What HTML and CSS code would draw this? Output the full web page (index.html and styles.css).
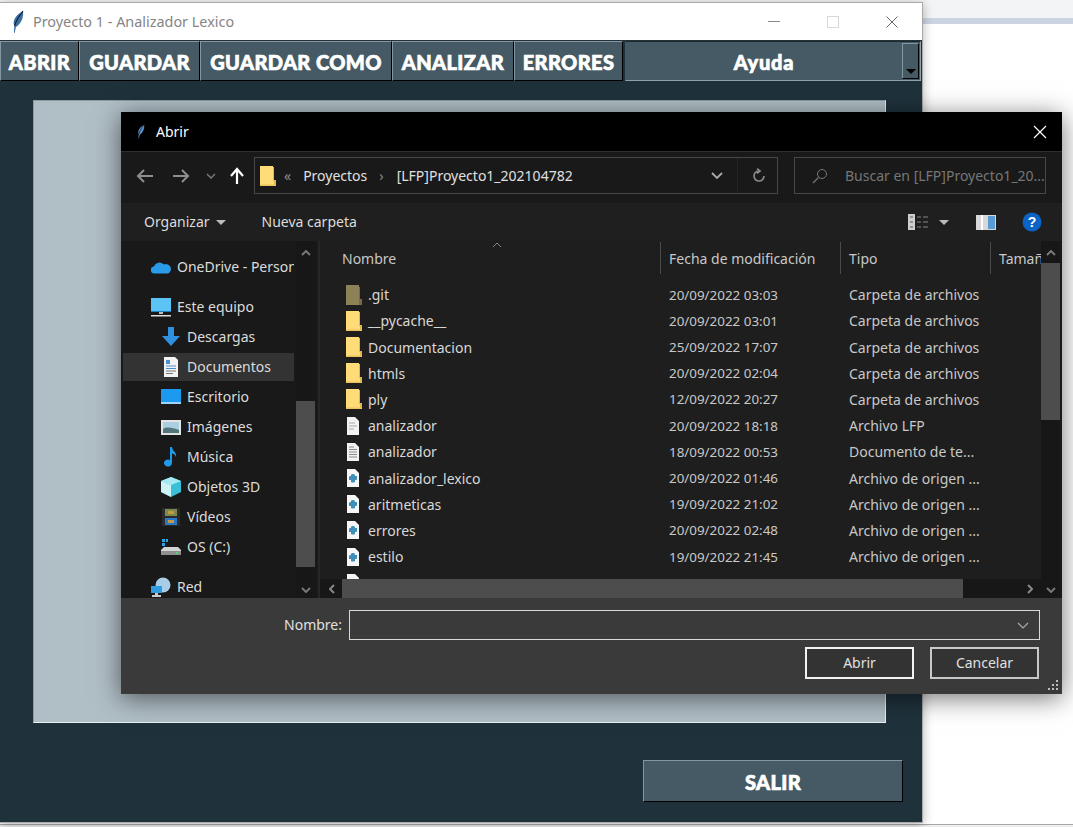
FILE: index.html
```html
<!DOCTYPE html>
<html lang="es">
<head>
    <meta charset="UTF-8">
    <title>Proyecto 1 - Analizador Lexico</title>
    <link rel="stylesheet" href="styles.css">
</head>
<body>
    <svg class="defs" width="0" height="0">
        <defs>
            <symbol id="feather" viewBox="0 0 16 24">
                <path d="M4 23 C4 20 4 18 4.500 16 C2 12 5 5 13 1 C14 7 11 14 6 17 C5.500 19 5 21 4.600 23Z" fill="currentColor"/>
                <path d="M4.500 16 C6 11 9 6 13 1" stroke="#0d2238" stroke-width="1.200" fill="none"/>
            </symbol>
            <symbol id="folder" viewBox="0 0 16 20">
                <path d="M0 0H13V14H16V20H0Z" fill="#ffdc78"/>
                <path d="M13 1H14V14H16V20H14V15H13Z" fill="#e0b84e"/>
                <path d="M0 18.500H16V20H0Z" fill="#eec25a"/>
            </symbol>
            <symbol id="folder-git" viewBox="0 0 16 20">
                <path d="M0 0H13V14H16V20H0Z" fill="#8d8158"/>
                <path d="M13 2H14V14H16V20H13Z" fill="#766b47"/>
            </symbol>
            <symbol id="doc-lfp" viewBox="0 0 14 18">
                <path d="M1 0H9L13 4V18H1Z" fill="#f2f2f2"/>
                <path d="M3 6H9M3 9H11M3 12H8" stroke="#aaa" fill="none"/>
            </symbol>
            <symbol id="doc-txt" viewBox="0 0 14 18">
                <path d="M1 0H9L13 4V18H1Z" fill="#f2f2f2"/>
                <path d="M3 4H8M3 6.500H11M3 9H11M3 11.500H11M3 14H11" stroke="#888" fill="none"/>
            </symbol>
            <symbol id="doc-py" viewBox="0 0 14 18">
                <path d="M1 0H9L13 4V18H1Z" fill="#f6f6f6"/>
                <path d="M7 5C9 5 9 6 9 7H11V10C11 11 10 11 9 11V13C7.500 14 5.500 13.500 5 13V11H3V8C3 7 4 7 5 7V6C5 5 6 5 7 5Z" fill="#3f8fb8"/>
            </symbol>
        </defs>
    </svg>

    <div class="bg-top"></div>
    <div class="bg-band"></div>
    <div class="bg-bottom"></div>

    <!-- ventana principal -->
    <div class="win-main">
        <div class="titlebar">
            <svg class="feather" width="16" height="24"><use href="#feather"/></svg>
            <span class="title-text">Proyecto 1 - Analizador Lexico</span>
            <div class="win-controls">
                <span class="ctl-min"></span>
                <span class="ctl-max"></span>
                <svg width="12" height="12" viewBox="0 0 12 12"><path d="M0.500 0.500L11.500 11.500M11.500 0.500L0.500 11.500" stroke="#666" fill="none"/></svg>
            </div>
        </div>
        <div class="menubar">
            <button class="tk-btn w-abrir">ABRIR</button>
            <button class="tk-btn w-guardar">GUARDAR</button>
            <button class="tk-btn w-como">GUARDAR COMO</button>
            <button class="tk-btn w-analizar">ANALIZAR</button>
            <button class="tk-btn w-errores">ERRORES</button>
            <div class="combo">
                <span class="combo-text">Ayuda</span>
                <span class="combo-arrow"></span>
            </div>
        </div>
        <div class="main-body">
            <div class="text-panel"></div>
            <div class="exit-row">
                <button class="tk-btn btn-salir">SALIR</button>
            </div>
        </div>
    </div>

    <!-- dialogo abrir -->
    <div class="dialog">
        <div class="dlg-title">
            <svg class="dlg-feather" width="10" height="15"><use href="#feather"/></svg>
            <span class="dlg-title-text">Abrir</span>
            <svg class="dlg-close" width="14" height="14" viewBox="0 0 14 14"><path d="M1 1L13 13M13 1L1 13" stroke="#fff" stroke-width="1.200" fill="none"/></svg>
        </div>

        <div class="dlg-nav">
            <div class="nav-arrows">
                <svg width="18" height="16" viewBox="0 0 18 16"><path d="M17 8H2M8 2L2 8L8 14" stroke="#8f8f8f" stroke-width="2" fill="none"/></svg>
                <svg class="nav-fwd" width="18" height="16" viewBox="0 0 18 16"><path d="M1 8H16M10 2L16 8L10 14" stroke="#8f8f8f" stroke-width="2" fill="none"/></svg>
                <svg class="nav-down" width="10" height="6" viewBox="0 0 10 6"><path d="M1 1L5 5L9 1" stroke="#777" stroke-width="1.500" fill="none"/></svg>
                <svg class="nav-up" width="16" height="18" viewBox="0 0 16 18"><path d="M8 17V3M2 9L8 2L14 9" stroke="#fff" stroke-width="2.200" fill="none"/></svg>
            </div>
            <div class="address">
                <svg class="addr-folder" width="16" height="20"><use href="#folder"/></svg>
                <span class="addr-more">«</span>
                <span class="addr-item">Proyectos</span>
                <span class="addr-sep">›</span>
                <span class="addr-item">[LFP]Proyecto1_202104782</span>
                <svg class="addr-chevron" width="12" height="8" viewBox="0 0 12 8"><path d="M1 1L6 6L11 1" stroke="#aaa" stroke-width="1.800" fill="none"/></svg>
                <span class="addr-refresh">
                    <svg width="14" height="15" viewBox="0 0 14 15"><path d="M7 3A5 5 0 1 0 12 8M5 0.800L8 3L5 5.400" stroke="#8a8a8a" stroke-width="1.700" fill="none"/></svg>
                </span>
            </div>
            <div class="search">
                <svg width="16" height="16" viewBox="0 0 16 16"><circle cx="10" cy="6" r="4.500" stroke="#777" fill="none"/><path d="M6.500 9.500L1 15" stroke="#777" stroke-width="1.300"/></svg>
                <span class="search-text">Buscar en [LFP]Proyecto1_20...</span>
            </div>
        </div>

        <div class="dlg-tools">
            <span class="tool-item">Organizar</span>
            <span class="caret"></span>
            <span class="tool-item tool-new">Nueva carpeta</span>
            <div class="tools-right">
                <svg width="21" height="16" viewBox="0 0 21 16"><path d="M0 0H7V16H0Z" fill="#cfcfcf"/><path d="M2 3H5M2 8H5M2 13H5" stroke="#555"/><path d="M9 3H13M15 3H20M9 8H13M15 8H20M9 13H13M15 13H20" stroke="#888"/></svg>
                <span class="caret caret-view"></span>
                <svg class="pane-icon" width="20" height="15" viewBox="0 0 20 15"><path d="M0 0H20V15H0Z" fill="#d8d8d8"/><path d="M12 1H19V14H12Z" fill="#5b9bd5"/><path d="M5 0H7V15H5Z" fill="#fff"/></svg>
                <svg class="help-icon" width="20" height="20" viewBox="0 0 20 20"><circle cx="10" cy="10" r="9.500" fill="#0b63c5"/><text x="10" y="15" text-anchor="middle" class="help-mark">?</text></svg>
            </div>
        </div>

        <div class="dlg-main">
            <div class="sidebar">
                <div class="side-list">
                    <div class="side-row top gap-after">
                        <svg width="20" height="14" viewBox="0 0 20 14"><path d="M3.500 13.500A3.500 3.500 0 0 1 3 6.500A6 6 0 0 1 13 4.500A4.500 4.500 0 0 1 17 13.500Z" fill="#2a9be8"/></svg>
                        <span>OneDrive - Personal</span>
                    </div>
                    <div class="side-row top">
                        <svg width="20" height="19" viewBox="0 0 20 19"><path d="M0 0H20V13H0Z" fill="#5cc4f5"/><path d="M0 13H20V14H0Z" fill="#1c7fc4"/><path d="M8 14H12V16H8Z" fill="#bbb"/><path d="M0 17H20V18.500H0Z" fill="#ddd"/></svg>
                        <span>Este equipo</span>
                    </div>
                    <div class="side-row">
                        <svg width="20" height="20" viewBox="0 0 20 20"><path d="M7 0H13V9H19L10 19L1 9H7Z" fill="#2f8fe0"/></svg>
                        <span>Descargas</span>
                    </div>
                    <div class="side-row selected">
                        <svg width="20" height="20" viewBox="0 0 20 20"><path d="M3 0H14L17 3V20H3Z" fill="#f2f2f2"/><path d="M5 3H9V7H5Z" fill="#4a90d0"/><path d="M5 9H15M5 11.500H15" stroke="#4a90d0"/><path d="M5 14H15M5 16.500H12" stroke="#777"/></svg>
                        <span>Documentos</span>
                    </div>
                    <div class="side-row">
                        <svg width="20" height="16" viewBox="0 0 20 16"><path d="M0 0H20V15H0Z" fill="#1b9af0"/><path d="M0 13H20V15H0Z" fill="#9ed4f7"/></svg>
                        <span>Escritorio</span>
                    </div>
                    <div class="side-row">
                        <svg width="20" height="15" viewBox="0 0 20 15"><path d="M0 0H20V15H0Z" fill="#e4e4e4"/><path d="M2 2H18V13H2Z" fill="#a9cfe0"/><path d="M2 9C6 6 12 8 18 10V13H2Z" fill="#52767a"/></svg>
                        <span>Imágenes</span>
                    </div>
                    <div class="side-row">
                        <svg width="20" height="20" viewBox="0 0 20 20"><path d="M9 0H11C11 4 16 5 15 10C14 7 12 6.500 11 6.500V16A4 3.500 0 1 1 9 13Z" fill="#1f9ae8"/></svg>
                        <span>Música</span>
                    </div>
                    <div class="side-row">
                        <svg width="20" height="20" viewBox="0 0 20 20"><path d="M10 0L20 4V15L10 20L0 15V4Z" fill="#39c0d6"/><path d="M0 4L10 8L20 4L10 0Z" fill="#a5eaf2"/><path d="M0 4L10 8V20L0 15Z" fill="#cdf3f5"/></svg>
                        <span>Objetos 3D</span>
                    </div>
                    <div class="side-row">
                        <svg width="20" height="18" viewBox="-1 0 20 18"><path d="M0 0H18V18H0Z" fill="#2b2b2b"/><path d="M3 1H15V8H3Z" fill="#7a8a50"/><path d="M3 10H15V17H3Z" fill="#2a78c8"/><path d="M6 3H12V6H6ZM6 12H12V15H6Z" fill="#c89a40"/></svg>
                        <span>Vídeos</span>
                    </div>
                    <div class="side-row gap-after">
                        <svg width="20" height="16" viewBox="0 0 20 16"><path d="M1 0H4V3H1ZM5 0H7V3H5ZM1 4H4V7H1Z" fill="#2fa4e0"/><path d="M3 8H17L20 11V16H0V11Z" fill="#d4d4d4"/><path d="M0 12H20V16H0Z" fill="#8f8f8f"/><path d="M15 13H17V15H15Z" fill="#4ddc6a"/></svg>
                        <span>OS (C:)</span>
                    </div>
                    <div class="side-row top">
                        <svg width="20" height="20" viewBox="0 0 20 20"><circle cx="12" cy="8" r="7.500" fill="#a9cde6"/><path d="M0 9H11V16H0Z" fill="#2f9be0"/><path d="M4 16H7V18H4ZM1 18H10V20H1Z" fill="#ccc"/></svg>
                        <span>Red</span>
                    </div>
                </div>
                <div class="scroll-v side-scroll">
                    <svg class="sb-up" width="10" height="6" viewBox="0 0 10 6"><path d="M1 5L5 1L9 5" stroke="#777" stroke-width="2" fill="none"/></svg>
                    <div class="side-thumb"></div>
                    <svg class="sb-down" width="10" height="6" viewBox="0 0 10 6"><path d="M1 1L5 5L9 1" stroke="#777" stroke-width="2" fill="none"/></svg>
                </div>
            </div>

            <div class="files">
                <div class="files-view">
                    <div class="file-head">
                        <span class="col-name">Nombre<svg class="sort-mark" width="10" height="6" viewBox="0 0 10 6"><path d="M1 5L5 1L9 5" stroke="#888" fill="none"/></svg></span>
                        <span class="col-date">Fecha de modificación</span>
                        <span class="col-type">Tipo</span>
                        <span class="col-size">Tamañ</span>
                    </div>
                    <div class="file-list">
                        <div class="file-row"><span class="col-name"><svg width="16" height="20"><use href="#folder-git"/></svg>.git</span><span class="col-date">20/09/2022 03:03</span><span class="col-type">Carpeta de archivos</span></div>
                        <div class="file-row"><span class="col-name"><svg width="16" height="20"><use href="#folder"/></svg>__pycache__</span><span class="col-date">20/09/2022 03:01</span><span class="col-type">Carpeta de archivos</span></div>
                        <div class="file-row"><span class="col-name"><svg width="16" height="20"><use href="#folder"/></svg>Documentacion</span><span class="col-date">25/09/2022 17:07</span><span class="col-type">Carpeta de archivos</span></div>
                        <div class="file-row"><span class="col-name"><svg width="16" height="20"><use href="#folder"/></svg>htmls</span><span class="col-date">20/09/2022 02:04</span><span class="col-type">Carpeta de archivos</span></div>
                        <div class="file-row"><span class="col-name"><svg width="16" height="20"><use href="#folder"/></svg>ply</span><span class="col-date">12/09/2022 20:27</span><span class="col-type">Carpeta de archivos</span></div>
                        <div class="file-row"><span class="col-name"><svg class="doc" width="14" height="18"><use href="#doc-lfp"/></svg>analizador</span><span class="col-date">20/09/2022 18:18</span><span class="col-type">Archivo LFP</span></div>
                        <div class="file-row"><span class="col-name"><svg class="doc" width="14" height="18"><use href="#doc-txt"/></svg>analizador</span><span class="col-date">18/09/2022 00:53</span><span class="col-type">Documento de te...</span></div>
                        <div class="file-row"><span class="col-name"><svg class="doc" width="14" height="18"><use href="#doc-py"/></svg>analizador_lexico</span><span class="col-date">20/09/2022 01:46</span><span class="col-type">Archivo de origen ...</span></div>
                        <div class="file-row"><span class="col-name"><svg class="doc" width="14" height="18"><use href="#doc-py"/></svg>aritmeticas</span><span class="col-date">19/09/2022 21:02</span><span class="col-type">Archivo de origen ...</span></div>
                        <div class="file-row"><span class="col-name"><svg class="doc" width="14" height="18"><use href="#doc-py"/></svg>errores</span><span class="col-date">20/09/2022 02:48</span><span class="col-type">Archivo de origen ...</span></div>
                        <div class="file-row"><span class="col-name"><svg class="doc" width="14" height="18"><use href="#doc-py"/></svg>estilo</span><span class="col-date">19/09/2022 21:45</span><span class="col-type">Archivo de origen ...</span></div>
                        <div class="file-row"><span class="col-name"><svg class="doc" width="14" height="18"><use href="#doc-py"/></svg></span></div>
                    </div>
                    <div class="scroll-h">
                        <svg width="6" height="10" viewBox="0 0 6 10"><path d="M5 1L1 5L5 9" stroke="#888" stroke-width="2" fill="none"/></svg>
                        <div class="h-thumb"></div>
                        <svg width="6" height="10" viewBox="0 0 6 10"><path d="M1 1L5 5L1 9" stroke="#888" stroke-width="2" fill="none"/></svg>
                    </div>
                </div>
                <div class="scroll-v file-scroll">
                    <svg class="sb-up" width="10" height="6" viewBox="0 0 10 6"><path d="M1 5L5 1L9 5" stroke="#777" stroke-width="2" fill="none"/></svg>
                    <div class="file-thumb"></div>
                    <svg class="sb-down" width="10" height="6" viewBox="0 0 10 6"><path d="M1 1L5 5L9 1" stroke="#777" stroke-width="2" fill="none"/></svg>
                </div>
            </div>
        </div>

        <div class="dlg-bottom">
            <div class="name-row">
                <label class="name-label">Nombre:</label>
                <div class="name-input">
                    <svg width="12" height="7" viewBox="0 0 12 7"><path d="M1 1L6 6L11 1" stroke="#aaa" stroke-width="1.200" fill="none"/></svg>
                </div>
            </div>
            <div class="btn-row">
                <button class="win-btn primary">Abrir</button>
                <button class="win-btn">Cancelar</button>
            </div>
            <svg class="grip" width="11" height="11" viewBox="0 0 11 11"><path d="M8 0H10V2H8ZM4 4H6V6H4ZM8 4H10V6H8ZM0 8H2V10H0ZM4 8H6V10H4ZM8 8H10V10H8Z" fill="#bbb"/></svg>
        </div>
    </div>
</body>
</html>
```

FILE: styles.css
```css
* {
    box-sizing: border-box;
}
body {
    margin: 0;
    height: 827px;
    background-color: #fff;
    overflow: hidden;
    font-family: "Noto Sans", sans-serif;
    position: relative;
}
.defs {
    position: absolute;
}
svg {
    flex-shrink: 0;
}
.bg-top {
    height: 18px;
    background-color: #f3f4f6;
}
.bg-band {
    height: 6px;
    background-color: #ccd4e4;
}
.bg-bottom {
    position: absolute;
    left: 0;
    right: 0;
    bottom: 0;
    height: 3px;
    border-top: 1px solid #a8a8a8;
    background-color: #eee;
}

/* main window */
.win-main {
    position: absolute;
    left: 0;
    top: 2px;
    width: 923px;
    height: 821px;
    display: flex;
    flex-direction: column;
    border: 1px solid #a9a9a9;
    border-left: none;
    box-shadow: 0 2px 10px rgba(0, 0, 0, 0.3);
    background-color: #1f323c;
}
.titlebar {
    height: 38px;
    background-color: #fff;
    display: flex;
    align-items: center;
    padding-left: 10px;
}
.feather {
    margin-right: 7px;
    color: #3d6fa3;
}
.title-text {
    font-size: 14.4px;
    color: #858585;
}
.win-controls {
    margin-left: auto;
    display: flex;
    align-items: center;
    gap: 47px;
    padding-right: 24px;
}
.ctl-min {
    width: 12px;
    height: 1px;
    background-color: #888;
}
.ctl-max {
    width: 12px;
    height: 12px;
    border: 1px solid #d8d8d8;
}
.menubar {
    height: 41px;
    display: flex;
    background-color: #1f323c;
    border-top: 1px solid #263238;
}
.tk-btn {
    background-color: #455a64;
    color: #fff;
    border: 1px solid #455a64;
    border-top-color: #8197a1;
    border-left-color: #8197a1;
    border-right-color: #000;
    border-bottom-color: #000;
    font-family: Lato, sans-serif;
    font-weight: 900;
    font-size: 20px;
    letter-spacing: 0.4px;
    -webkit-text-stroke: 0.7px #fff;
    padding: 2px 0 0;
    height: 40px;
}
.w-abrir { width: 79px; }
.w-guardar { width: 121px; }
.w-como { width: 192px; }
.w-analizar { width: 122px; }
.w-errores { width: 109px; }
.combo {
    width: 296px;
    height: 40px;
    margin-left: 2px;
    background-color: #455a64;
    border: 1px solid #455a64;
    border-top-color: #1a2830;
    border-bottom-color: #8fa3ad;
    border-right-color: #8fa3ad;
    display: flex;
    align-items: center;
    position: relative;
}
.combo-text {
    flex: 1;
    text-align: center;
    padding-top: 2px;
    color: #fff;
    font-family: Lato, sans-serif;
    font-weight: 900;
    font-size: 20px;
    letter-spacing: 0.8px;
    -webkit-text-stroke: 0.7px #fff;
}
.combo-arrow {
    width: 17px;
    height: 36px;
    margin-right: 1px;
    background-color: #455a64;
    border: 1px solid #000;
    border-top-color: #8197a1;
    border-left-color: #8197a1;
    position: relative;
}
.combo-arrow::after {
    content: "";
    position: absolute;
    left: 3px;
    bottom: 4px;
    border-left: 5px solid transparent;
    border-right: 5px solid transparent;
    border-top: 5px solid #000;
}
.main-body {
    flex: 1;
    padding: 19px 37px 20px 33px;
    display: flex;
    flex-direction: column;
}
.text-panel {
    width: 853px;
    height: 623px;
    background-color: #b0bec5;
    border: 1px solid #e8f0f4;
    border-top-color: #8c9ba3;
    border-left-color: #8c9ba3;
}
.exit-row {
    margin-top: 37px;
    padding-left: 610px;
}
.btn-salir {
    width: 260px;
    height: 42px;
}

/* open dialog */
.dialog {
    position: absolute;
    left: 121px;
    top: 112px;
    width: 941px;
    height: 582px;
    display: flex;
    flex-direction: column;
    background-color: #1c1c1c;
    box-shadow: 0 4px 24px rgba(0, 0, 0, 0.55);
}
.dlg-title {
    height: 39px;
    background-color: #000;
    display: flex;
    align-items: center;
    padding-left: 15px;
    padding-right: 15px;
}
.dlg-feather {
    color: #5a8fc8;
}
.dlg-title-text {
    margin-left: 10px;
    font-size: 14px;
    color: #fff;
    padding-bottom: 1px;
}
.dlg-close {
    margin-left: auto;
}
.dlg-nav {
    height: 52px;
    background-color: #191919;
    border-top: 1px solid #2e2e2e;
    display: flex;
    align-items: flex-start;
    padding-top: 5px;
}
.nav-arrows {
    width: 133px;
    height: 37px;
    padding-left: 15px;
    display: flex;
    align-items: center;
}
.nav-fwd {
    margin-left: 18px;
}
.nav-down {
    margin-left: 16px;
}
.nav-up {
    margin-left: 13px;
}
.address {
    width: 524px;
    height: 37px;
    border: 1px solid #474747;
    display: flex;
    align-items: center;
    padding-left: 5px;
    color: #e0e0e0;
    font-size: 14px;
}
.addr-more {
    margin-left: 8px;
    color: #8a8a8a;
}
.addr-item {
    margin-left: 12px;
}
.addr-item + .addr-sep {
    margin-left: 12px;
    margin-right: 1px;
    color: #8a8a8a;
}
.addr-chevron {
    margin-left: auto;
    margin-right: 14px;
}
.addr-refresh {
    width: 40px;
    height: 100%;
    border-left: 1px solid #232323;
    display: flex;
    align-items: center;
    justify-content: center;
    padding-left: 2px;
}
.search {
    margin-left: 16px;
    width: 252px;
    height: 37px;
    border: 1px solid #474747;
    display: flex;
    align-items: center;
    padding-left: 17px;
    gap: 17px;
    overflow: hidden;
}
.search-text {
    font-size: 14px;
    color: #767676;
    white-space: nowrap;
}
.dlg-tools {
    height: 38px;
    background-color: #1f1f1f;
    display: flex;
    align-items: center;
    padding-left: 23px;
    color: #dcdcdc;
    font-size: 14px;
}
.tool-item {
    padding-bottom: 2px;
}
.caret {
    margin-left: 6px;
    border-left: 5px solid transparent;
    border-right: 5px solid transparent;
    border-top: 5px solid #bcbcbc;
}
.tool-new {
    margin-left: 36px;
}
.tools-right {
    margin-left: auto;
    display: flex;
    align-items: center;
    padding-right: 20px;
}
.caret-view {
    margin-left: 10px;
}
.pane-icon {
    margin-left: 27px;
}
.help-icon {
    margin-left: 26px;
}
.help-mark {
    font-family: "Liberation Sans", sans-serif;
    font-weight: bold;
    font-size: 14px;
    fill: #fff;
}
.dlg-main {
    height: 357px;
    display: flex;
    background-color: #191919;
    overflow: hidden;
}
.sidebar {
    width: 199px;
    display: flex;
    border-right: 2px solid #272727;
    padding-left: 2px;
}
.side-list {
    width: 171px;
    padding-top: 11px;
    overflow: hidden;
    color: #dcdcdc;
    font-size: 14px;
    white-space: nowrap;
}
.side-row {
    height: 30px;
    display: flex;
    align-items: center;
    padding-left: 38px;
}
.side-row span {
    padding-bottom: 2px;
}
.side-row svg {
    margin-right: 6px;
}
.side-row.top {
    padding-left: 28px;
}
.side-row.gap-after {
    margin-bottom: 10px;
}
.side-row.selected {
    background-color: #333;
    height: 28px;
    margin: 1px 0;
}
.scroll-v {
    width: 19px;
    display: flex;
    flex-direction: column;
    align-items: center;
    position: relative;
    background-color: #171717;
}
.side-scroll {
    margin-left: 2px;
}
.sb-up {
    position: absolute;
    top: 9px;
}
.sb-down {
    position: absolute;
    bottom: 5px;
}
.side-thumb {
    position: absolute;
    top: 160px;
    width: 19px;
    height: 166px;
    background-color: #4d4d4d;
}
.files {
    flex: 1;
    display: flex;
    min-width: 0;
}
.files-view {
    width: 721px;
    display: flex;
    flex-direction: column;
    background-color: #1e1e1e;
    overflow: hidden;
    position: relative;
}
.file-head {
    display: flex;
    height: 40.6px;
    flex-shrink: 0;
    align-items: flex-start;
    color: #c8c8c8;
    font-size: 14px;
    white-space: nowrap;
}
.file-head span {
    height: 32px;
    margin-top: 1px;
    display: flex;
    align-items: center;
    border-right: 1px solid #4a4a4a;
    position: relative;
}
.file-head .col-size {
    border-right: none;
    width: 50px;
    overflow: hidden;
}
.sort-mark {
    position: absolute;
    left: 172px;
    top: 0;
}
.col-name {
    width: 341px;
    padding-left: 22px;
    display: flex;
    align-items: center;
}
.col-date {
    width: 180px;
    padding-left: 8px;
}
.col-type {
    width: 150px;
    padding-left: 8px;
}
.col-size {
    padding-left: 8px;
}
.file-list {
    flex: 1;
    overflow: hidden;
    color: #d8d8d8;
    font-size: 14px;
    white-space: nowrap;
}
.file-row {
    height: 26.2px;
    display: flex;
    align-items: center;
}
.file-row .col-name {
    padding-left: 26px;
}
.file-row .col-name svg {
    margin-right: 6px;
}
.file-row .col-name svg.doc {
    margin-right: 8px;
}
.file-row .col-date {
    color: #c8c8c8;
    font-size: 13.4px;
}
.file-row .col-type {
    color: #c8c8c8;
}
.scroll-h {
    height: 19px;
    flex-shrink: 0;
    background-color: #171717;
    display: flex;
    align-items: center;
    padding-left: 9px;
    padding-right: 7px;
}
.h-thumb {
    width: 621px;
    height: 19px;
    margin-left: 7px;
    margin-right: 64px;
    background-color: #4d4d4d;
}
.file-scroll {
    margin-left: 0;
}
.file-thumb {
    position: absolute;
    top: 22px;
    width: 19px;
    height: 157px;
    background-color: #4d4d4d;
}
.dlg-bottom {
    flex: 1;
    background-color: #3a3a3a;
    padding-top: 12px;
    position: relative;
}
.name-row {
    display: flex;
    align-items: center;
    height: 30px;
}
.name-label {
    width: 221px;
    text-align: right;
    color: #e0e0e0;
    font-size: 14px;
    padding-bottom: 2px;
}
.name-input {
    width: 691px;
    height: 30px;
    margin-left: 7px;
    border: 1px solid #d8d8d8;
    display: flex;
    align-items: center;
    justify-content: flex-end;
    padding-right: 10px;
}
.btn-row {
    margin-top: 7px;
    display: flex;
    justify-content: flex-end;
    gap: 16px;
    padding-right: 23px;
}
.win-btn {
    width: 109px;
    height: 32px;
    background-color: #333;
    color: #e0e0e0;
    border: 2px solid #c8c8c8;
    font-family: "Noto Sans", sans-serif;
    font-size: 14px;
    padding: 0 0 2px;
}
.win-btn.primary {
    border-color: #f2f2f2;
}
.grip {
    position: absolute;
    right: 3px;
    bottom: 3px;
}
```
